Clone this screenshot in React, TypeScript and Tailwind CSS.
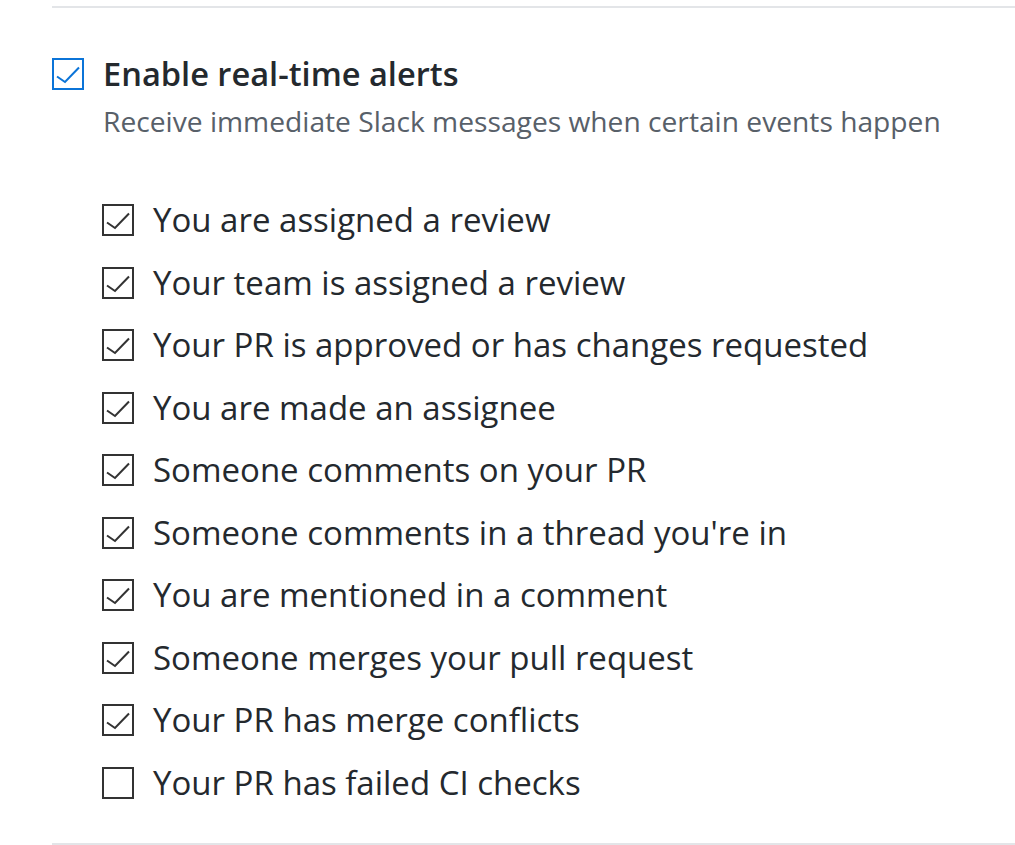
import React from "react";

const items: [string, boolean][] = [
  ["You are assigned a review", true],
  ["Your team is assigned a review", true],
  ["Your PR is approved or has changes requested", true],
  ["You are made an assignee", true],
  ["Someone comments on your PR", true],
  ["Someone comments in a thread you're in", true],
  ["You are mentioned in a comment", true],
  ["Someone merges your pull request", true],
  ["Your PR has merge conflicts", true],
  ["Your PR has failed CI checks", false],
];

function Box({ checked, blue }: { checked: boolean; blue?: boolean }) {
  return (
    <div
      className={
        blue
          ? "w-[32px] h-[32px] shrink-0 border-2 border-[#0b74d8] bg-white"
          : "w-[32px] h-[32px] shrink-0 border-2 border-[#333333] bg-white"
      }
    >
      {checked && (
        <svg width="28" height="28" viewBox="0 0 28 28" className="block">
          <polyline
            points="3,16.5 11,22 25,7.5"
            fill="none"
            stroke={blue ? "#0b74d8" : "#333333"}
            strokeWidth="2"
            strokeLinejoin="miter"
          />
        </svg>
      )}
    </div>
  );
}

export default function App() {
  return (
    <div
      className="w-[1015px] h-[845px] bg-white overflow-hidden pl-[52px] pt-[6px]"
      style={{ fontFamily: '"Open Sans", "Noto Sans", sans-serif' }}
    >
      <div className="border-t-2 border-[#e3e5e8]" />
      <div className="pt-[50px] flex items-center gap-[19px]">
        <Box checked blue />
        <div className="text-[32.6px] leading-[32px] font-semibold text-[#24292e] whitespace-nowrap">
          Enable real-time alerts
        </div>
      </div>
      <div className="pl-[51px] pt-[13px] text-[28.2px] leading-[36px] text-[#586069] whitespace-nowrap">
        Receive immediate Slack messages when certain events happen
      </div>
      <div className="pl-[50px] pt-[50px]">
        {items.map(([label, checked]) => (
          <div key={label} className="flex items-center h-[62.5px] gap-[19px]">
            <Box checked={checked} />
            <span className="text-[33px] leading-[40px] text-[#24292e] whitespace-nowrap">{label}</span>
          </div>
        ))}
      </div>
      <div className="mt-[29px] border-t-2 border-[#e3e5e8]" />
    </div>
  );
}
